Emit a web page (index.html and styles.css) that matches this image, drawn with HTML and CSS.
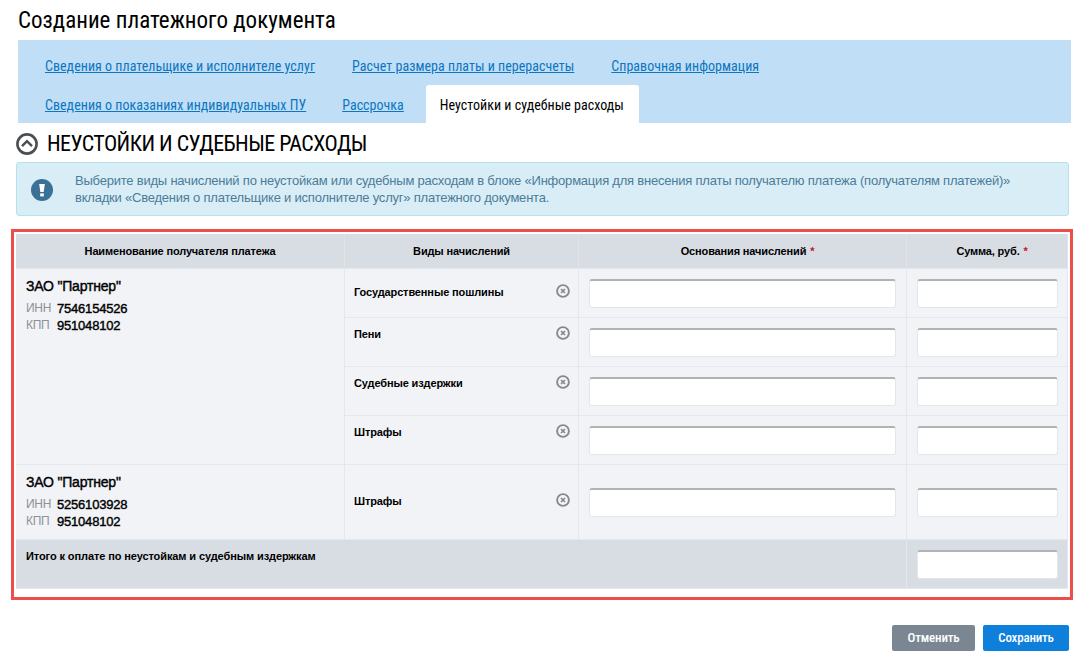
FILE: index.html
```html
<!DOCTYPE html>
<html lang="ru">
<head>
<meta charset="utf-8">
<title>Создание платежного документа</title>
<link rel="stylesheet" href="styles.css">
</head>
<body>
<h1 class="page-title">Создание платежного документа</h1>
<nav class="tabs">
  <div class="tab-row tab-row-top">
    <a class="tab" href="#">Сведения о плательщике и исполнителе услуг</a>
    <a class="tab" href="#">Расчет размера платы и перерасчеты</a>
    <a class="tab" href="#">Справочная информация</a>
  </div>
  <div class="tab-row tab-row-bottom">
    <a class="tab" href="#">Сведения о показаниях индивидуальных ПУ</a>
    <a class="tab" href="#">Рассрочка</a>
    <span class="tab tab-active">Неустойки и судебные расходы</span>
  </div>
</nav>
<div class="section-head">
  <svg class="section-icon" width="22" height="22" viewBox="0 0 22 22"><circle cx="11" cy="11" r="9.6" fill="none" stroke="#4b4f54" stroke-width="2.6"/><path d="M6 13.2 11 8.2l5 5" fill="none" stroke="#4b4f54" stroke-width="2.5"/></svg>
  <h2 class="section-title">Неустойки и судебные расходы</h2>
</div>
<div class="notice">
  <svg class="notice-icon" width="22" height="22" viewBox="0 0 22 22"><circle cx="11" cy="11" r="11" fill="#3a7197"/><path d="M8.2 5h5.6l-1.1 8h-3.4z" fill="#fff"/><rect x="9.2" y="14.4" width="3.6" height="3" fill="#fff"/></svg>
  <p class="notice-text">Выберите виды начислений по неустойкам или судебным расходам в блоке «Информация для внесения платы получателю платежа (получателям платежей)» вкладки «Сведения о плательщике и исполнителе услуг» платежного документа.</p>
</div>
<div class="highlight">
  <table class="charges">
    <colgroup>
      <col class="col-name"><col class="col-kind"><col class="col-base"><col class="col-sum">
    </colgroup>
    <thead>
      <tr>
        <th>Наименование получателя платежа</th>
        <th>Виды начислений</th>
        <th class="th-req">Основания начислений <span class="req">*</span></th>
        <th class="th-req">Сумма, руб. <span class="req">*</span></th>
      </tr>
    </thead>
    <tbody>
      <tr>
        <td class="payer" rowspan="4">
          <div class="payer-name">ЗАО "Партнер"</div>
          <div class="payer-line payer-first"><span class="payer-label">ИНН</span><span class="payer-value">7546154526</span></div>
          <div class="payer-line"><span class="payer-label">КПП</span><span class="payer-value">951048102</span></div>
        </td>
        <td class="kind kind-first"><div class="kind-inner"><span>Государственные пошлины</span><svg class="remove" width="14" height="14" viewBox="0 0 14 14"><circle cx="7" cy="7" r="5.9" fill="none" stroke="#85898e" stroke-width="1.9"/><path d="M5 5l4 4M9 5l-4 4" stroke="#85898e" stroke-width="1.7"/></svg></div></td>
        <td class="field"><input class="input" type="text"></td>
        <td class="field"><input class="input" type="text"></td>
      </tr>
      <tr>
        <td class="kind"><div class="kind-inner"><span>Пени</span><svg class="remove" width="14" height="14" viewBox="0 0 14 14"><circle cx="7" cy="7" r="5.9" fill="none" stroke="#85898e" stroke-width="1.9"/><path d="M5 5l4 4M9 5l-4 4" stroke="#85898e" stroke-width="1.7"/></svg></div></td>
        <td class="field"><input class="input" type="text"></td>
        <td class="field"><input class="input" type="text"></td>
      </tr>
      <tr>
        <td class="kind"><div class="kind-inner"><span>Судебные издержки</span><svg class="remove" width="14" height="14" viewBox="0 0 14 14"><circle cx="7" cy="7" r="5.9" fill="none" stroke="#85898e" stroke-width="1.9"/><path d="M5 5l4 4M9 5l-4 4" stroke="#85898e" stroke-width="1.7"/></svg></div></td>
        <td class="field"><input class="input" type="text"></td>
        <td class="field"><input class="input" type="text"></td>
      </tr>
      <tr>
        <td class="kind"><div class="kind-inner"><span>Штрафы</span><svg class="remove" width="14" height="14" viewBox="0 0 14 14"><circle cx="7" cy="7" r="5.9" fill="none" stroke="#85898e" stroke-width="1.9"/><path d="M5 5l4 4M9 5l-4 4" stroke="#85898e" stroke-width="1.7"/></svg></div></td>
        <td class="field"><input class="input" type="text"></td>
        <td class="field"><input class="input" type="text"></td>
      </tr>
      <tr class="row-tall">
        <td class="payer">
          <div class="payer-name">ЗАО "Партнер"</div>
          <div class="payer-line payer-first"><span class="payer-label">ИНН</span><span class="payer-value">5256103928</span></div>
          <div class="payer-line"><span class="payer-label">КПП</span><span class="payer-value">951048102</span></div>
        </td>
        <td class="kind kind-middle"><div class="kind-inner"><span>Штрафы</span><svg class="remove" width="14" height="14" viewBox="0 0 14 14"><circle cx="7" cy="7" r="5.9" fill="none" stroke="#85898e" stroke-width="1.9"/><path d="M5 5l4 4M9 5l-4 4" stroke="#85898e" stroke-width="1.7"/></svg></div></td>
        <td class="field field-middle"><input class="input" type="text"></td>
        <td class="field field-middle"><input class="input" type="text"></td>
      </tr>
      <tr class="total">
        <td class="total-label" colspan="3">Итого к оплате по неустойкам и судебным издержкам</td>
        <td class="field"><input class="input" type="text"></td>
      </tr>
    </tbody>
  </table>
</div>
<div class="actions">
  <button class="btn btn-cancel" type="button">Отменить</button>
  <button class="btn btn-save" type="button">Сохранить</button>
</div>
</body>
</html>
```
FILE: styles.css
```css
* { box-sizing: border-box; }
html, body { margin: 0; padding: 0; background: #fff; }
body { font-family: "Liberation Sans", Arial, sans-serif; color: #000; height: 661px; overflow: hidden; }

.page-title {
  margin: 0;
  padding-left: 18px;
  height: 40px;
  font: 400 23px/42px Roboto, sans-serif;
  font-stretch: 75%;
}

.tabs { margin: 0 8px 0 18px; padding-left: 13px; background: #c0dff7; font: 400 14px/20px Roboto, sans-serif; font-stretch: 75%; letter-spacing: 0.025px; }
.tab-row { display: flex; gap: 8px; }
.tab-row-top { height: 45px; padding-top: 16px; gap: 9px; }
.tab-row-bottom { height: 38px; }
.tab { padding: 0 14px; color: #0e75bf; text-decoration: underline; white-space: nowrap; }
.tab-row-bottom .tab { padding-top: 10px; }
.tab-active { background: #fff; color: #000; text-decoration: none; border-radius: 3px 3px 0 0; padding-right: 15px; }

.section-head { display: flex; align-items: center; height: 39px; padding-left: 16px; gap: 9px; padding-top: 2px; }
.section-icon { flex: none; }
.section-title { margin: 0; font: 400 22px/26px Roboto, sans-serif; font-stretch: 75%; letter-spacing: -0.55px; text-transform: uppercase; white-space: nowrap; }

.notice {
  display: flex;
  align-items: center;
  margin: 0 10px 13px 16px;
  height: 54px;
  padding-left: 14px;
  gap: 22px;
  background: #d9edf6;
  border: 1px solid #b4e3ee;
  border-radius: 3px;
}
.notice-icon { flex: none; margin-top: 1px; }
.notice-text { margin: 0; width: 960px; font: 400 13px/17px "Liberation Sans", Arial, sans-serif; letter-spacing: -0.215px; color: #4b7c99; }

.highlight { margin: 0 6px 0 11px; padding: 2px 2px 8px; border: 3px solid #ef4d4a; }

.charges { width: 1052px; table-layout: fixed; border-collapse: separate; border-spacing: 0; }
.col-name { width: 329px; }
.col-kind { width: 234px; }
.col-base { width: 328px; }
.col-sum { width: 161px; }

.charges th {
  height: 35px;
  padding: 0 4px;
  background: #d8dde4;
  border-right: 1px solid #dfe3e8;
  border-bottom: 1px solid #e4e8ec;
  font: 700 11px/14px "Liberation Sans", Arial, sans-serif;
  letter-spacing: -0.15px;
  text-align: center;
}
.charges .th-req { padding: 0 0 0 10px; }
.req { margin-left: 1px; color: #c4122a; }
.charges td { padding: 0; background: #f1f3f7; border-right: 1px solid #e4e8ec; border-bottom: 1px solid #e4e8ec; vertical-align: top; }

.charges .payer { padding: 8px 10px 0; }
.payer-name { font: 400 14px/18px "Liberation Sans", Arial, sans-serif; letter-spacing: -0.2px; -webkit-text-stroke: 0.4px #000; }
.payer-line { font: 400 13px/17px "Liberation Sans", Arial, sans-serif; display: flex; gap: 8px; }
.payer-first { margin-top: 5px; }
.payer-label { color: #8d9196; font-size: 12px; width: 23px; letter-spacing: -0.3px; white-space: nowrap; }
.payer-value { letter-spacing: -0.2px; -webkit-text-stroke: 0.4px #000; }

.charges .kind { padding: 8px 8px 0 9px; font: 700 11px/14px "Liberation Sans", Arial, sans-serif; letter-spacing: -0.13px; }
.charges .kind-first { padding-top: 15px; }
.charges .kind-middle { vertical-align: middle; padding-top: 0; padding-bottom: 2px; }
.kind-inner { display: flex; justify-content: space-between; align-items: center; }
.remove { margin-bottom: 2px; }

.charges .field { padding: 10px 10px 9px; line-height: 0; }
.charges .field:last-child { padding-right: 9px; }
.row-tall td { height: 75px; }
.charges .field-middle { vertical-align: middle; padding-top: 0; padding-bottom: 0; }
.input {
  display: block;
  width: 100%;
  height: 29px;
  margin: 0;
  padding: 0 6px;
  background: #fff;
  border: 1px solid #e4e7ea;
  border-top: 2px solid #b0b2b4;
  border-radius: 3px;
}

.charges .total-label { background: #d8dde4; padding: 9px 10px 0; font: 700 11px/14px "Liberation Sans", Arial, sans-serif; letter-spacing: -0.1px; }
.charges .total .field { background: #d8dde4; }

.actions { display: flex; justify-content: flex-end; gap: 8px; margin: 25px 10px 0 0; }
.btn { height: 26px; padding: 0; border: 0; border-radius: 2px; color: #fff; font: 500 13px/26px Roboto, sans-serif; font-stretch: 75%; letter-spacing: -0.2px; }
.btn-cancel { width: 83px; background: #7a8792; }
.btn-save { width: 86px; background: #0e7fdb; }
```
